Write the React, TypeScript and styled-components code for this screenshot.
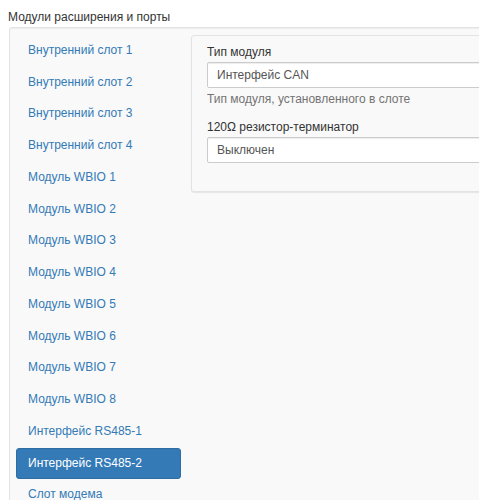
import styled, { createGlobalStyle } from "styled-components";

const GlobalStyle = createGlobalStyle`
  html, body {
    margin: 0;
    padding: 0;
    overflow: hidden;
    background: #fff;
  }
  body {
    font-family: "Liberation Sans", Arial, sans-serif;
    font-size: 12px;
    color: #333;
  }
`;

const Page = styled.div`
  padding: 8px 0 0 8px;
  width: 620px;
`;

const Title = styled.div`
  font-size: 12px;
  line-height: 19px;
  color: #333;
`;

const Well = styled.div`
  display: flex;
  gap: 10px;
  margin-left: 1px;
  padding: 8px 0 10px 6px;
  background: #f9f9f9;
  border: 1px solid #e3e3e3;
  border-radius: 3px;
  box-shadow: inset 0 1px 1px rgba(0, 0, 0, 0.05);
`;

const Nav = styled.ul`
  list-style: none;
  margin: 0;
  padding: 0;
  width: 165px;
  flex: none;
  display: flex;
  flex-direction: column;
  gap: 1.9px;
`;

const NavLink = styled.li<{ $active?: boolean }>`
  padding: 6px 11px;
  line-height: 17.85px;
  border-radius: 3px;
  color: ${({ $active }) => ($active ? "#fff" : "#337ab7")};
  background: ${({ $active }) => ($active ? "#337ab7" : "transparent")};
  border: 1px solid ${({ $active }) => ($active ? "#2e6da4" : "transparent")};
  margin: -1px 0;
`;

const Panel = styled.div`
  align-self: flex-start;
  flex: 1;
  margin-top: -1px;
  padding: 8px 15px 28px;
  background: #f9f9f9;
  border: 1px solid #e3e3e3;
  border-radius: 3px;
  box-shadow: 0 1px 1px rgba(0, 0, 0, 0.08);
`;

const FormGroup = styled.div`
  margin-bottom: 11px;
  &:last-child {
    margin-bottom: 0;
  }
`;

const Label = styled.div`
  line-height: 17px;
  margin-bottom: 1px;
  color: #333;
`;

const Select = styled.div`
  height: 26px;
  box-sizing: border-box;
  padding: 0 9px;
  line-height: 24px;
  background: #fff;
  border: 1px solid #ccc;
  border-radius: 2px;
  color: #555;
  box-shadow: inset 0 1px 1px rgba(0, 0, 0, 0.075);
`;

const Help = styled.div`
  margin-top: 3px;
  line-height: 17px;
  color: #737373;
`;

const items = [
  "Внутренний слот 1",
  "Внутренний слот 2",
  "Внутренний слот 3",
  "Внутренний слот 4",
  "Модуль WBIO 1",
  "Модуль WBIO 2",
  "Модуль WBIO 3",
  "Модуль WBIO 4",
  "Модуль WBIO 5",
  "Модуль WBIO 6",
  "Модуль WBIO 7",
  "Модуль WBIO 8",
  "Интерфейс RS485-1",
  "Интерфейс RS485-2",
  "Слот модема",
];

export default function App() {
  return (
    <Page>
      <GlobalStyle />
      <Title>Модули расширения и порты</Title>
      <Well>
        <Nav>
          {items.map((it) => (
            <NavLink key={it} $active={it === "Интерфейс RS485-2"}>
              {it}
            </NavLink>
          ))}
        </Nav>
        <Panel>
          <FormGroup>
            <Label>Тип модуля</Label>
            <Select>Интерфейс CAN</Select>
            <Help>Тип модуля, установленного в слоте</Help>
          </FormGroup>
          <FormGroup>
            <Label>120Ω резистор-терминатор</Label>
            <Select>Выключен</Select>
          </FormGroup>
        </Panel>
      </Well>
    </Page>
  );
}
